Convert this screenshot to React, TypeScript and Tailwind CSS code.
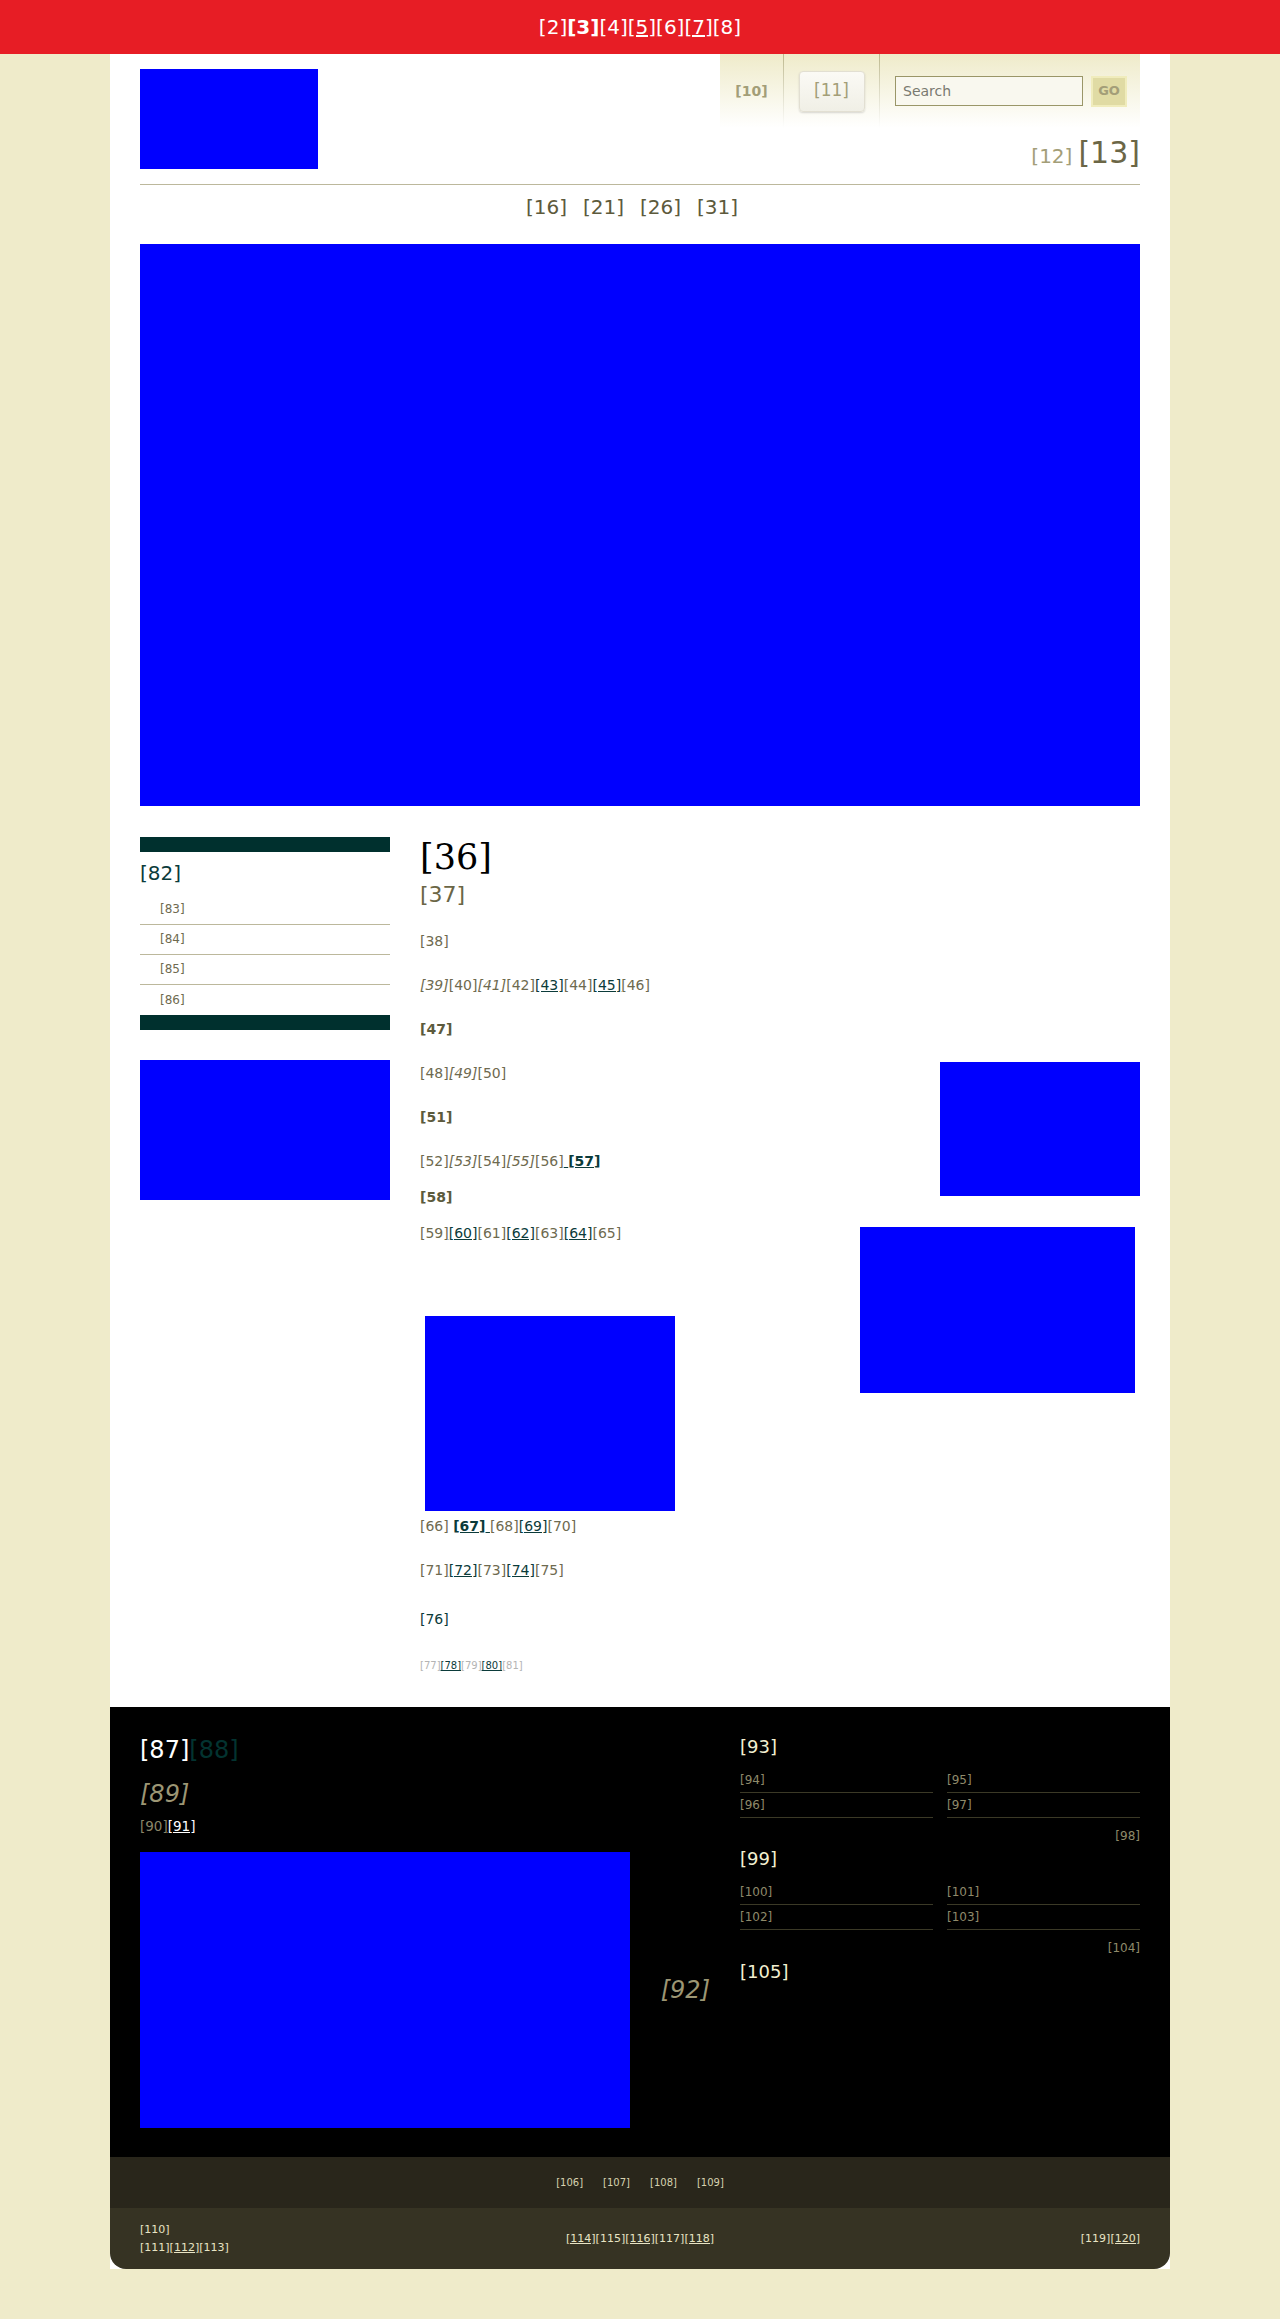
const link = 'text-[#0b3b3a] underline'

export default function App() {
  return (
    <div className="min-h-screen bg-[#efebca] pb-[50px] font-['DejaVu_Sans',sans-serif] text-[#6e6a4f]">
      {/* Top bar */}
      <div className="flex h-[54px] items-center justify-center bg-[#e71d25] text-[20px] text-white">
        <span>[2]</span>
        <b>[3]</b>
        <span>[4]</span>
        <a className="underline">[5]</a>
        <span>[6]</span>
        <a className="underline">[7]</a>
        <span>[8]</span>
      </div>

      <div className="mx-auto w-[1060px] bg-white">
        <div className="px-[30px] pb-[34px]">
          {/* Header */}
          <header className="flex items-start justify-between">
            <div className="mt-[15px] h-[100px] w-[178px] bg-[#0000ff]" />
            <div className="flex w-[420px] flex-col">
              <div className="flex h-[74px] bg-linear-to-b from-[#efebca] to-white">
                <div className="flex w-[63px] items-center justify-center text-[14px] font-bold text-[#a39e78]">
                  [10]
                </div>
                <div className="w-px bg-linear-to-b from-[#bdb88e] to-white" />
                <div className="flex w-[95px] items-center justify-center">
                  <div className="flex h-[41px] w-[66px] items-center justify-center rounded-[4px] border border-[#e2dfd2] bg-linear-to-b from-[#fbfaf5] to-[#f0efe6] text-[17px] text-[#a39e78] shadow-[0_1px_2px_rgba(0,0,0,0.15)]">
                    [11]
                  </div>
                </div>
                <div className="w-px bg-linear-to-b from-[#bdb88e] to-white" />
                <div className="flex flex-1 items-center gap-[8px] pl-[15px]">
                  <input
                    className="h-[30px] w-[188px] border border-[#9a9668] bg-[#f9f8ef] px-[7px] text-[14px] outline-none placeholder:text-[#7a7a70]"
                    placeholder="Search"
                  />
                  <button className="flex h-[31px] w-[36px] items-center justify-center border-2 border-[#f0ecbc] bg-[#e0dba4] text-[13px] font-bold text-[#a39e78]">
                    GO
                  </button>
                </div>
              </div>
              <div className="mt-[10px] flex items-baseline justify-end leading-none">
                <span className="text-[20px] text-[#a39e78]">[12]</span>
                <span className="ml-[6px] text-[30px] text-[#6b6646]">[13]</span>
              </div>
            </div>
          </header>

          <div className="mt-[15px] h-px bg-[#bcb89c]" />

          {/* Nav */}
          <nav className="mt-[10px] flex justify-center text-[20px] leading-[24px] text-[#5d5a3c]">
            <a className="mr-[16px]">[16]</a>
            <a className="mr-[16px]">[21]</a>
            <a className="mr-[16px]">[26]</a>
            <a className="mr-[16px]">[31]</a>
          </nav>

          {/* Hero */}
          <div className="mt-[25px] h-[562px] bg-[#0000ff]" />

          {/* Main */}
          <div className="mt-[31px] flex items-start gap-[30px]">
            {/* Sidebar */}
            <aside className="w-[250px]">
              <div className="h-[15px] bg-[#00302e]" />
              <h3 className="text-[20px] leading-[43px] text-[#0b3b3a]">[82]</h3>
              <ul className="text-[12px] text-[#6e6a4f]">
                <li className="h-[30px] border-b border-[#bcb89c] pl-[20px] leading-[29px]">[83]</li>
                <li className="h-[30px] border-b border-[#bcb89c] pl-[20px] leading-[29px]">[84]</li>
                <li className="h-[30px] border-b border-[#bcb89c] pl-[20px] leading-[29px]">[85]</li>
                <li className="h-[30px] pl-[20px] leading-[30px]">[86]</li>
              </ul>
              <div className="h-[15px] bg-[#00302e]" />
              <div className="mt-[30px] h-[140px] bg-[#0000ff]" />
            </aside>

            {/* Article */}
            <article className="flex-1 text-[14px] leading-[22px]">
              <h1 className="font-['DejaVu_Serif',serif] text-[35px] leading-[40px] text-black">[36]</h1>
              <h2 className="mt-[4px] text-[22px] leading-[28px] text-[#6b6646]">[37]</h2>
              <p className="mt-[21px]">[38]</p>
              <p className="mt-[22px]">
                <i>[39]</i>[40]<i>[41]</i>[42]<a className={link}>[43]</a>[44]<a className={link}>[45]</a>[46]
              </p>
              <p className="mt-[22px] font-bold text-[#5c5a3c]">[47]</p>
              <p className="mt-[22px]">
                <span className="float-right h-[134px] w-[200px] bg-[#0000ff]" />
                [48]<i>[49]</i>[50]
              </p>
              <p className="mt-[22px] font-bold text-[#5c5a3c]">[51]</p>
              <p className="mt-[22px]">
                [52]<i>[53]</i>[54]<i>[55]</i>[56]
                <a className={link}>
                  {' '}
                  <b>[57]</b>
                </a>
              </p>
              <p className="mt-[14px] font-bold text-[#5c5a3c]">[58]</p>
              <p className="mt-[14px]">
                <span className="float-right m-[5px] h-[166px] w-[275px] bg-[#0000ff]" />
                [59]<a className={link}>[60]</a>[61]<a className={link}>[62]</a>[63]<a className={link}>[64]</a>[65]
              </p>
              <div className="mt-[72px] ml-[5px] h-[195px] w-[250px] bg-[#0000ff]" />
              <p className="mt-[4px]">
                [66]{' '}
                <a className={link}>
                  <b>[67]</b>{' '}
                </a>
                [68]<a className={link}>[69]</a>[70]
              </p>
              <p className="mt-[22px]">
                [71]<a className={link}>[72]</a>[73]<a className={link}>[74]</a>[75]
              </p>
              <p className="mt-[27px] text-[#0b3b3a]">[76]</p>
              <p className="mt-[29px] text-[10px] leading-[14px] text-[#b4b4b4]">
                [77]<a className={link}>[78]</a>[79]<a className={link}>[80]</a>[81]
              </p>
            </article>
          </div>
        </div>

        {/* Footer */}
        <footer className="flex gap-[30px] bg-black px-[30px] pt-[28px] pb-[29px]">
          <div className="w-[570px]">
            <div className="text-[24px] leading-[30px] text-white">
              [87]<span className="text-[#033330]">[88]</span>
            </div>
            <div className="mt-[14px] text-[24px] leading-[30px] text-[#9c9674] italic">[89]</div>
            <div className="mt-[8px] text-[13.5px] leading-[18px] text-[#8a8668]">
              [90]<a className="text-white underline">[91]</a>
            </div>
            <div className="mt-[17px] flex items-center">
              <div className="h-[276px] w-[490px] bg-[#0000ff]" />
              <span className="ml-[31px] text-[24px] text-[#9c9674] italic">[92]</span>
            </div>
          </div>

          <div className="w-[400px]">
            <FooterList title="[93]" items={['[94]', '[95]', '[96]', '[97]']} more="[98]" />
            <div className="mt-[3px]">
              <FooterList title="[99]" items={['[100]', '[101]', '[102]', '[103]']} more="[104]" />
            </div>
            <h4 className="mt-[4px] text-[18px] leading-[24px] text-[#f2efd0]">[105]</h4>
          </div>
        </footer>

        <div className="flex h-[51px] items-center justify-center gap-[20px] bg-[#29261b] text-[10px] text-[#d6d2b0]">
          <a>[106]</a>
          <a>[107]</a>
          <a>[108]</a>
          <a>[109]</a>
        </div>

        <div className="grid h-[61px] grid-cols-3 items-center rounded-b-[16px] bg-[#363323] px-[30px] text-[11px] leading-[18px] text-[#e8e4c4]">
          <div>
            <div>[110]</div>
            <div>
              [111]<a className="underline">[112]</a>[113]
            </div>
          </div>
          <div className="text-center">
            <a className="underline">[114]</a>[115]<a className="underline">[116]</a>[117]
            <a className="underline">[118]</a>
          </div>
          <div className="text-right">
            [119]<a className="underline">[120]</a>
          </div>
        </div>
      </div>
    </div>
  )
}

function FooterList({ title, items, more }: { title: string; items: string[]; more: string }) {
  return (
    <div>
      <h4 className="text-[18px] leading-[24px] text-[#f2efd0]">{title}</h4>
      <div className="mt-[9px] grid grid-cols-2 gap-x-[14px] text-[12px] leading-[16px] text-[#8f8a6a]">
        {items.map((it) => (
          <a key={it} className="border-b border-[#3b3926] py-[4px]">
            {it}
          </a>
        ))}
      </div>
      <div className="mt-[10px] text-right text-[12px] leading-[16px] text-[#8f8a6a]">{more}</div>
    </div>
  )
}
